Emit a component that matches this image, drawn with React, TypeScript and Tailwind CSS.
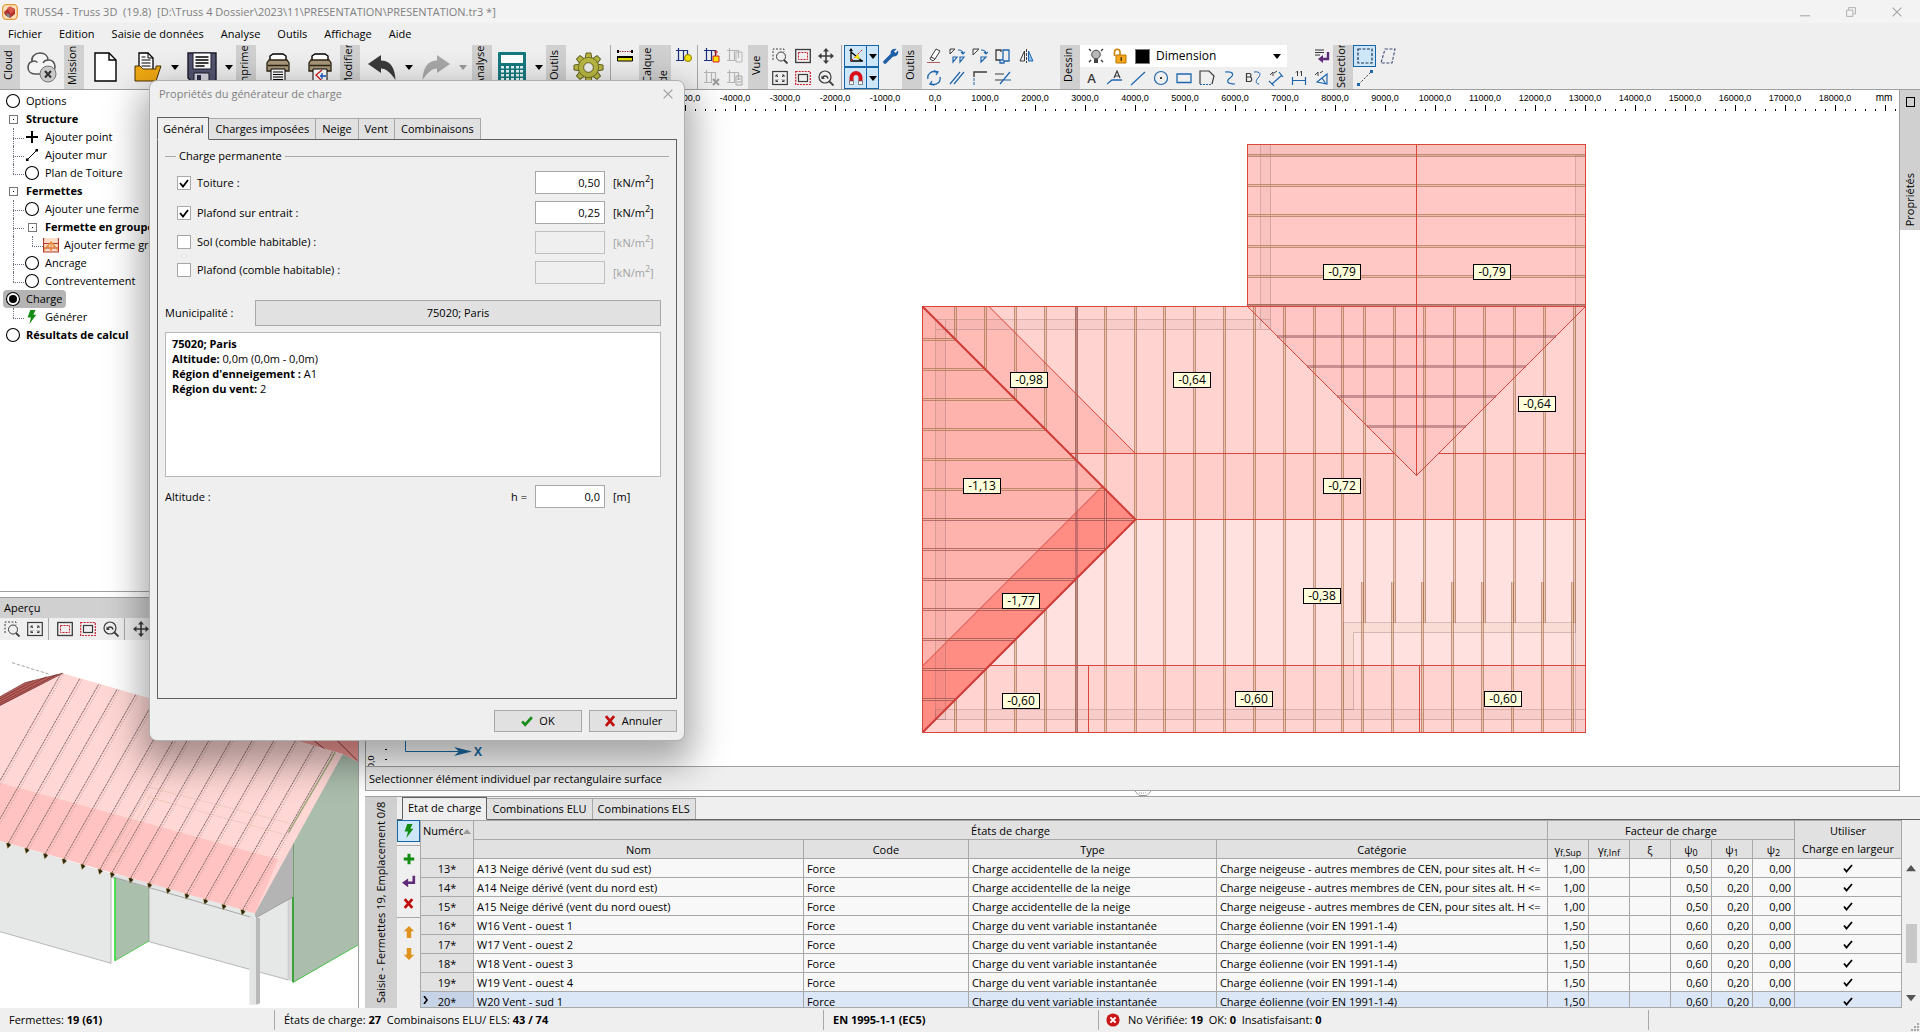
import { useState } from 'react';
import type { ReactNode } from 'react';
import clsx from 'clsx';

/* ---------- icons ---------- */

function Icon({
  children,
  size = 'h-4 w-4',
}: {
  children: ReactNode;
  size?: string;
}) {
  return (
    <svg viewBox="0 0 16 16" fill="none" className={clsx('shrink-0', size)}>
      {children}
    </svg>
  );
}

const dark = '#3c3c3c';
const blue = '#1f66ad';

const BoltIcon = () => (
  <Icon size="h-3.5 w-3.5">
    <path d="M6 0h6L9.500 5.500H13L5 16l1.800-7.500H3z" fill="#128c12" />
  </Icon>
);

const ZoomAreaIcon = () => (
  <Icon>
    <path d="M1 12V1h11v3" stroke={dark} strokeDasharray="2 1.500" />
    <circle cx="9" cy="8.500" r="4.500" stroke={dark} />
    <path d="m12 12 3.500 3.500" stroke={dark} strokeWidth="1.800" />
  </Icon>
);

const FitIcon = () => (
  <Icon>
    <rect x="0.700" y="1.500" width="14.600" height="13" stroke={dark} strokeWidth="1.200" />
    <path
      d="M4 7V5h2M4 5l2 2M12 7V5h-2M12 5l-2 2M4 9.500v2h2M4 11.500l2-2M12 9.500v2h-2M12 11.500l-2-2"
      stroke={dark}
    />
  </Icon>
);

const FrameInIcon = () => (
  <Icon>
    <rect x="0.700" y="1.500" width="14.600" height="13" stroke={dark} strokeWidth="1.300" />
    <rect x="3.500" y="4.500" width="9" height="7" stroke="#c81e2d" strokeDasharray="2 1" />
  </Icon>
);

const FrameOutIcon = () => (
  <Icon>
    <rect x="0.700" y="1.500" width="14.600" height="13" stroke="#c81e2d" strokeWidth="1.200" strokeDasharray="2 1" />
    <rect x="3.500" y="4.500" width="9" height="7" stroke={dark} strokeWidth="1.200" />
  </Icon>
);

const ZoomBackIcon = () => (
  <Icon>
    <circle cx="7" cy="7" r="6" stroke={dark} strokeWidth="1.200" />
    <path d="m11.500 11.500 4 4" stroke={dark} strokeWidth="1.800" />
    <path d="M4.500 8.500C5 5.500 9 5 10 8.500" stroke={dark} strokeWidth="1.500" />
    <path d="M3.500 5.500v3.500H7z" fill={dark} />
  </Icon>
);

const MoveIcon = () => (
  <Icon>
    <path d="M8 2v12M2 8h12" stroke={dark} strokeWidth="1.600" />
    <path d="m8 0 3 3.500H5zM8 16l3-3.500H5zM0 8l3.500-3v6zM16 8l-3.500-3v6z" fill={dark} />
  </Icon>
);

const GreenCheck = () => (
  <Icon size="h-3 w-3">
    <path d="m1.500 8.500 4 4.500 9-10" stroke="#1a8a1a" strokeWidth="3.500" />
  </Icon>
);

const RedCross = () => (
  <Icon size="h-3 w-3">
    <path d="m2.500 1.500 11 13M13.500 1.500l-11 13" stroke="#c00d0d" strokeWidth="3.600" />
  </Icon>
);

const EnterIcon = () => (
  <Icon size="h-3.5 w-3.5">
    <path d="M13.500 2v8H6" stroke="#5f2a78" strokeWidth="3" />
    <path d="M0 10l7-5v10z" fill="#5f2a78" />
  </Icon>
);

const Caret = ({ color = '#000' }: { color?: string }) => (
  <svg viewBox="0 0 8 5" className="h-[5px] w-2">
    <path d="M0 0h8L4 5z" fill={color} />
  </svg>
);

const LayerIcon = ({ mark, off }: { mark: ReactNode; off?: boolean }) => {
  const c = off ? '#b5b5b5' : '#1c2f7a';
  return (
    <Icon>
      <path d="M2.500 0v13M7.500 2v11M11.500 2v8M0 2.500h12M0 12.500h8" stroke={c} strokeWidth="1.200" />
      {mark}
    </Icon>
  );
};

const CloudIcon = () => (
  <svg viewBox="0 0 30 32" className="h-8 w-[30px]" fill="none">
    <path
      d="M8 23c-4 0-7-2.500-7-6.500 0-3 1.500-5 4-6C4 6 8 2 13 2s8 3 8 7c4-.5 7 2.500 7 6.500 0 4.500-3 7.500-7 7.500z"
      stroke="#555"
      strokeWidth="1.600"
      fill="#f5f5f5"
    />
    <path d="M5 10.500c2-1 4-.5 5.500 1M21 9c-2 0-4 1-5 3" stroke="#555" strokeWidth="1.400" />
    <circle cx="21" cy="23" r="8" fill="#c9c9c9" stroke="#777" />
    <path d="m18 20 6 6.500M24 20l-6 6.500" stroke="#333" strokeWidth="2" />
  </svg>
);

const DocIcon = () => (
  <svg viewBox="0 0 24 30" className="h-[30px] w-6" fill="none">
    <path d="M1 1h14l7 7v21H1z" fill="#fff" stroke="#000" strokeWidth="1.400" />
    <path d="M15 1v7h7" stroke="#000" strokeWidth="1.400" />
  </svg>
);

const FolderIcon = () => (
  <svg viewBox="0 0 28 30" className="h-[30px] w-7" fill="none">
    <path d="M5 17V1h9l5 5v11" fill="#fff" stroke="#000" strokeWidth="1.300" />
    <path d="M14 1v5h5M7.500 5h4M7.500 8h9M7.500 11h9M7.500 14h9" stroke="#000" />
    <path d="M1 29V14h5l3 3h13v-3h5L22 29z" fill="#f0a812" stroke="#4a3300" />
  </svg>
);

const FloppyIcon = () => (
  <svg viewBox="0 0 30 30" className="h-[30px] w-[30px]" fill="none">
    <path d="M1 1h28v28H4l-3-3z" fill="#545472" stroke="#1b1b2b" strokeWidth="1.400" />
    <path d="M6 1h18v16H6z" fill="#fff" stroke="#1b1b2b" />
    <path d="M8.500 5h13M8.500 8h13M8.500 11h13M8.500 14h9" stroke="#000" strokeWidth="1.300" />
    <path d="M7 21h15v8H7z" fill="#d8d8e4" stroke="#1b1b2b" />
    <path d="M10 23h4v6h-4z" fill="#2b2b45" />
  </svg>
);

const PrinterIcon = ({ drawing }: { drawing?: boolean }) => (
  <svg viewBox="0 0 24 30" className="h-[30px] w-6" fill="none">
    <path d="M4 9V4l3-2h10l3 2v5" fill="#fff" stroke="#000" strokeWidth="1.400" />
    <path d="M3 8h18l2 3v8H1v-8z" fill="#a8977a" stroke="#2c2416" strokeWidth="1.300" />
    <path d="M2 13.500h20" stroke="#2c2416" strokeWidth="1.500" />
    <path d="M5 17h14v12H5z" fill="#fff" stroke="#000" />
    {drawing ? (
      <>
        <path d="m14 18-6 5 6 6" stroke="#d01515" strokeWidth="1.300" />
        <path d="M14 21v6M12 24h6" stroke="#1551c0" strokeWidth="1.300" />
      </>
    ) : (
      <path d="M7 20h10M7 22.500h10M7 25h10M7 27.500h10" stroke="#000" />
    )}
  </svg>
);

const UndoIcon = ({ color, flip }: { color: string; flip?: boolean }) => (
  <svg
    viewBox="0 0 28 28"
    className={clsx('h-7 w-7', flip && '-scale-x-100')}
    fill={color}
  >
    <path d="M0 11 13 2v5.500c9 0 14 7 14.500 19.500C23 20 18 15.500 13 15.500V20z" />
  </svg>
);

const CalcIcon = () => (
  <svg viewBox="0 0 28 30" className="h-[30px] w-7" fill="none">
    <rect width="28" height="30" rx="1" fill="#157a80" />
    <path d="M3 3h22v8H3z" fill="#fff" />
    {[14, 18, 22, 26].map((y) =>
      [3, 8, 13, 18, 22].map((x) => (
        <rect key={`${x}-${y}`} x={x} y={y} width="3" height="2.500" fill="#e9f6f6" />
      )),
    )}
  </svg>
);

const GearIcon = () => (
  <svg viewBox="-16 -16 32 32" className="h-[31px] w-[31px]">
    {[0, 45, 90, 135, 180, 225, 270, 315].map((a) => (
      <path
        key={a}
        d="M-3.500-9-2.500-15h5l1 6z"
        transform={`rotate(${a})`}
        fill="#b9b843"
        stroke="#5e5d1e"
      />
    ))}
    <circle r="10.500" fill="#b9b843" stroke="#5e5d1e" strokeWidth="0.800" />
    <circle r="5" fill="#efefef" stroke="#5e5d1e" />
  </svg>
);

const LogoIcon = () => (
  <Icon>
    <rect x="0.700" y="0.700" width="14.600" height="14.600" rx="3.500" fill="#ffe3bd" stroke="#e39a3c" strokeWidth="1.300" />
    <path d="m2 8 6-5.500L13 5v5l-5 4-5-3z" fill="#b3332c" />
    <path d="m8 2.500 5 3-4 4.500-4-6z" fill="#d95a4d" />
    <path d="M4.500 9 8 10.500V14l-3.500-2z" fill="#7c7f8c" />
  </Icon>
);

/* ---------- toolbar ---------- */

function Strip({ children, wide }: { children: ReactNode; wide?: boolean }) {
  return (
    <div
      className={clsx(
        'flex h-11 shrink-0 rotate-180 items-start justify-center overflow-hidden bg-[#d0d0d0] pt-1 leading-4 whitespace-nowrap [writing-mode:vertical-rl]',
        wide ? 'w-8' : 'w-5',
      )}
    >
      {children}
    </div>
  );
}

function BigButton({
  label,
  children,
  menu,
  caret = '#000',
  wide,
}: {
  label: string;
  children: ReactNode;
  menu?: boolean;
  caret?: string;
  wide?: boolean;
}) {
  return (
    <>
      <button
        aria-label={label}
        className={clsx(
          'flex h-11 shrink-0 items-center justify-center',
          wide ? 'w-11' : 'w-10',
        )}
      >
        {children}
      </button>
      {menu && (
        <button
          aria-label={`${label} menu`}
          className="flex h-11 w-3.5 shrink-0 items-center justify-center"
        >
          <Caret color={caret} />
        </button>
      )}
    </>
  );
}

function SmallButton({
  children,
  label,
  active,
}: {
  children?: ReactNode;
  label: string;
  active?: boolean;
}) {
  return (
    <button
      aria-label={label}
      className={clsx(
        'flex h-[22px] w-[23px] shrink-0 items-center justify-center',
        active && 'border border-[#1566a8] bg-[#cde6f8]',
      )}
    >
      {children}
    </button>
  );
}

const Sep = () => <div className="h-11 w-px shrink-0 bg-[#a8a8a8]" />;

const drawTools: [string, ReactNode][] = [
  ['Texte', <span key="i" className="text-[13px] font-semibold text-[#3c3c3c]">A</span>],
  [
    'Repère',
    <Icon key="i">
      <path d="M0 14 5 10h10" stroke={blue} strokeWidth="1.300" />
      <path d="m7 8 3-7 3 7M8 6h4" stroke={dark} strokeWidth="1.200" />
    </Icon>,
  ],
  ['Ligne', <Icon key="i"><path d="M1 15 15 2" stroke={blue} strokeWidth="1.200" /></Icon>],
  [
    'Cercle',
    <Icon key="i">
      <circle cx="8" cy="8" r="6.500" stroke={blue} strokeWidth="1.200" />
      <circle cx="8" cy="8" r="1" fill="#000" />
    </Icon>,
  ],
  ['Rectangle', <Icon key="i"><path d="M1 4h14v8.500H1z" stroke={blue} strokeWidth="1.300" /></Icon>],
  [
    'Polygone',
    <Icon key="i">
      <path d="M1 14V1h9l5 5-2 8" stroke={dark} strokeWidth="1.200" />
      <path d="M1 14.500h12" stroke={blue} strokeDasharray="2 1" />
    </Icon>,
  ],
  ['Courbe', <Icon key="i"><path d="M3 2c9-1 9 3 5 6s-3 6 5 6" stroke={blue} strokeWidth="1.200" /></Icon>],
  [
    'Bézier',
    <Icon key="i">
      <path d="M1.500 3v9M1.500 3.500h3c2 0 2 3.500 0 3.500h-3 3.500c2.500 0 2 4.500 0 4.500H1.500" stroke={dark} strokeWidth="1.200" />
      <path d="M9 2c7-1 7 3 4 6s-2 6 1 6" stroke={blue} />
    </Icon>,
  ],
  [
    'Cote oblique',
    <Icon key="i">
      <path d="m4 14 10-9M1 11l5 5M11 2l4 5" stroke={blue} strokeWidth="1.200" />
      <path d="M2 5l3-3v4M6 3l3-2" stroke={dark} />
    </Icon>,
  ],
  [
    'Cote',
    <Icon key="i">
      <path d="M1.500 7v8M14.500 7v8M2 10.500h12" stroke={blue} strokeWidth="1.200" />
      <path d="M5 2.500 6.500 1v5M9 2.500 10.500 1v5" stroke={dark} />
    </Icon>,
  ],
  [
    "Cote d'angle",
    <Icon key="i">
      <path d="M3 12 13 4v10zM8 8l4 6" stroke={blue} strokeWidth="1.200" />
      <path d="M1 5l3-3v4M6 3l3-2" stroke={dark} />
    </Icon>,
  ],
];

const lockedLayer = (
  <LayerIcon mark={<path d="M9 8h6v6H9zM12 2v5M10 4h4" fill="#ffe000" stroke="#c22" />} />
);

function Toolbar() {
  return (
    <div className="flex h-[45px] shrink-0 items-start overflow-hidden border-b border-[#a0a0a0] bg-[#efefef]">
      <Strip>Cloud</Strip>
      <BigButton label="Cloud" wide><CloudIcon /></BigButton>
      <Strip>Mission</Strip>
      <BigButton label="Nouveau" wide><DocIcon /></BigButton>
      <BigButton label="Ouvrir" menu><FolderIcon /></BigButton>
      <BigButton label="Enregistrer" menu><FloppyIcon /></BigButton>
      <Strip>Imprimer</Strip>
      <BigButton label="Imprimer" wide><PrinterIcon /></BigButton>
      <BigButton label="Imprimer dessin"><PrinterIcon drawing /></BigButton>
      <Strip>Modifier</Strip>
      <div className="flex shrink-0 px-0.5">
        <BigButton label="Annuler" menu><UndoIcon color="#3a3a3a" /></BigButton>
        <BigButton label="Rétablir" menu caret="#9a9a9a"><UndoIcon color="#a8a8a8" flip /></BigButton>
      </div>
      <Strip>Analyse</Strip>
      <BigButton label="Calculer" menu><CalcIcon /></BigButton>
      <Strip>Outils</Strip>
      <BigButton label="Paramètres" wide><GearIcon /></BigButton>
      <Sep />
      <div className="flex w-7 shrink-0 justify-center">
        <SmallButton label="Mesurer">
          <Icon>
            <path d="M0 3.500h16" stroke="#a33" strokeDasharray="1.500 1" />
            <path d="M0 2h2v3H0zM14 2h2v3h-2z" fill="#000" />
            <path d="M0.500 9h15v4h-15z" fill="#e6e000" stroke="#000" />
            <path d="M0 9h16" stroke="#000" strokeWidth="2" />
          </Icon>
        </SmallButton>
      </div>
      <Strip wide>Calque<br />de</Strip>
      <div className="flex w-[26px] shrink-0 justify-center">
        <SmallButton label="Calque visible">
          <LayerIcon mark={<circle cx="12" cy="10" r="3.500" fill="#f4e400" stroke="#8a7a00" />} />
        </SmallButton>
      </div>
      <Sep />
      <div className="grid shrink-0 grid-cols-[23px_23px] px-0.5">
        <SmallButton label="Verrouiller calque">{lockedLayer}</SmallButton>
        <SmallButton label="Copier calque">
          <LayerIcon off mark={<path d="M9 4h6v10H9z" stroke="#b5b5b5" />} />
        </SmallButton>
        <SmallButton label="Supprimer calque">
          <LayerIcon off mark={<path d="m9 9 6 6M15 9l-6 6" stroke="#9a9a9a" strokeWidth="2" />} />
        </SmallButton>
        <SmallButton label="Liste des calques">
          <LayerIcon off mark={<path d="M9 6h6v9H9zM10 9h4M10 12h4" stroke="#a5a5a5" />} />
        </SmallButton>
      </div>
      <Strip>Vue</Strip>
      <div className="grid shrink-0 grid-cols-[23px_23px_23px]">
        <SmallButton label="Zoom zone"><ZoomAreaIcon /></SmallButton>
        <SmallButton label="Cadre intérieur"><FrameInIcon /></SmallButton>
        <SmallButton label="Déplacer"><MoveIcon /></SmallButton>
        <SmallButton label="Zoom tout"><FitIcon /></SmallButton>
        <SmallButton label="Cadre extérieur"><FrameOutIcon /></SmallButton>
        <SmallButton label="Zoom précédent"><ZoomBackIcon /></SmallButton>
      </div>
      <div className="ml-1 flex shrink-0 gap-0.5">
        <Sep />
        <div className="grid grid-cols-[23px_12px]">
          <SmallButton label="Accrochage axes" active>
            <Icon>
              <path d="M3 1v12h12M3 4l11 9" stroke="#000" strokeWidth="1.300" />
              <path d="M3 13 14 2" stroke="#e02020" strokeDasharray="3 1.500" />
              <path d="M6 10 10 6l2 5z" fill="#f2e200" />
              <path d="m3 0 2 3H1z" fill="#000" />
            </Icon>
          </SmallButton>
          <button aria-label="Options axes" className="flex items-center justify-center border border-l-0 border-[#1566a8] bg-[#cde6f8]">
            <Caret />
          </button>
          <SmallButton label="Aimant" active>
            <Icon>
              <path d="M3.500 11V7.500a4.500 4.500 0 0 1 9 0V11" stroke="#d8121a" strokeWidth="4" />
              <path d="M1.500 11h4v3.500h-4zM10.500 11h4v3.500h-4z" fill="#fff" stroke="#555" strokeWidth="0.700" />
            </Icon>
          </SmallButton>
          <button aria-label="Options aimant" className="flex items-center justify-center border border-l-0 border-[#1566a8] bg-[#cde6f8]">
            <Caret />
          </button>
        </div>
      </div>
      <SmallButton label="Réglages">
        <Icon>
          <path d="m2 14 7-7" stroke="#1f5fa8" strokeWidth="3.600" strokeLinecap="round" />
          <path d="M8 3c1-2 3.500-2.500 5.500-2L11 3.500 12.500 5 15 2.500c1 3-1 6-4 6S7 6 8 3z" fill="#1f5fa8" />
        </Icon>
      </SmallButton>
      <Strip>Outils</Strip>
      <div className="mr-[23px] grid shrink-0 grid-cols-[repeat(5,23px)]">
        <SmallButton label="Effacer">
          <Icon>
            <path d="m5 9 5-8 4 2-5 8zM5 9l-1 2 3 2 2-2" stroke={dark} fill="#fff" />
            <path d="M1 14.500h13" stroke="#b06060" />
          </Icon>
        </SmallButton>
        <SmallButton label="Copier">
          <Icon>
            <path d="M1 1h5L1 6z" stroke={dark} />
            <path d="M9 2c4 0 5 1 5 4M12 4l2 2 2-2M4 9h4l-4 5zM11 9h4l-4 5z" stroke={blue} strokeWidth="1.200" />
          </Icon>
        </SmallButton>
        <SmallButton label="Déplacer élément">
          <Icon>
            <path d="M1 1h6L1 7z" stroke={dark} />
            <path d="M9 2c4 0 5 1 5 4M12 4l2 2 2-2M9 9h5l-5 5z" stroke={blue} strokeWidth="1.200" />
          </Icon>
        </SmallButton>
        <SmallButton label="Décaler">
          <Icon>
            <path d="M6 4V2H1v10h4" stroke={dark} strokeWidth="1.300" />
            <path d="M9 2h5v11H9v2H5v-3h3V2z" stroke={blue} strokeWidth="1.300" />
          </Icon>
        </SmallButton>
        <SmallButton label="Miroir">
          <Icon>
            <path d="M8.500 1v14" stroke={dark} strokeDasharray="3 1" />
            <path d="M6.500 3v10H2z" stroke={dark} />
            <path d="M10.500 3v10H15z" stroke={blue} fill="#8fc1ea" />
          </Icon>
        </SmallButton>
        <SmallButton label="Rotation">
          <Icon>
            <path d="M2 9a6 6 0 0 1 9-6.500M14 7a6 6 0 0 1-9 6.500M8 1l4 1-2 3M8 15l-4-1 2-3" stroke={blue} strokeWidth="1.300" />
          </Icon>
        </SmallButton>
        <SmallButton label="Parallèle">
          <Icon><path d="M1 14 11 2M5 14 15 2" stroke={blue} strokeWidth="1.200" /></Icon>
        </SmallButton>
        <SmallButton label="Angle">
          <Icon>
            <path d="M2 15V7" stroke={blue} strokeDasharray="3 1" />
            <path d="M2 7V2h13" stroke={dark} strokeWidth="1.400" />
          </Icon>
        </SmallButton>
        <SmallButton label="Couper">
          <Icon>
            <path d="M0 4h9M0 10h8" stroke={dark} strokeWidth="1.200" />
            <path d="M15 2 5 14M9 10h7" stroke={blue} strokeWidth="1.200" />
          </Icon>
        </SmallButton>
      </div>
      <Strip>Dessin</Strip>
      <div className="shrink-0">
        <div className="flex">
          <div className="flex h-[22px] w-[207px] items-center bg-white pl-2">
            <Icon>
              <circle cx="8" cy="6.500" r="4.300" fill="#b8b8b8" stroke="#444" />
              <path d="M6 11h4v4H6z" fill="#444" />
              <path d="m1 1 2 2M15 1l-2 2M1 14l2-2M15 14l-2-2" stroke="#333" strokeWidth="1.300" />
            </Icon>
            <span className="w-2" />
            <Icon>
              <path d="M2.500 8V4a2.700 2.700 0 0 1 5.500 0v3" stroke="#c98000" strokeWidth="1.600" />
              <path d="M4 7h10v8H4z" fill="#f5a81c" stroke="#b87500" />
              <path d="M8.500 9h1.500v4H8.500z" fill="#5a3b00" />
            </Icon>
            <span className="ml-[7px] h-[15px] w-[15px] border border-[#777] bg-black" />
            <select aria-label="Calque de dessin" className="ml-1.5 flex-1 appearance-none bg-transparent text-[12px] outline-none">
              <option>Dimension</option>
            </select>
            <span className="mr-1.5"><Caret /></span>
          </div>
          <div className="ml-[23px]">
            <SmallButton label="Importer">
              <Icon>
                <path d="M1 2h9M1 4.500h9M1 7h5" stroke="#333" />
                <path d="M14 4v7H8" stroke="#5f2a78" strokeWidth="2.400" />
                <path d="m4 11 5-4v8z" fill="#5f2a78" />
              </Icon>
            </SmallButton>
          </div>
        </div>
        <div className="flex">
          {drawTools.map(([label, icon]) => (
            <SmallButton key={label} label={label}>{icon}</SmallButton>
          ))}
        </div>
      </div>
      <Strip>Selection</Strip>
      <div className="grid shrink-0 grid-cols-[23px_23px]">
        <SmallButton label="Sélection rectangle" active>
          <Icon><path d="M1 1h14v14H1z" stroke="#1d3557" strokeWidth="1.200" strokeDasharray="3 1.500" /></Icon>
        </SmallButton>
        <SmallButton label="Sélection polygone">
          <Icon><path d="M5 1h10l-3 14H1z" stroke="#444a78" strokeWidth="1.100" strokeDasharray="3 1.500" /></Icon>
        </SmallButton>
        <SmallButton label="Sélection ligne">
          <Icon>
            <path d="m2 14 12-12" stroke={dark} strokeDasharray="2 1.500" />
            <path d="M0 13h3v3H0zM13 0h3v3h-3z" fill={blue} />
          </Icon>
        </SmallButton>
      </div>
    </div>
  );
}

/* ---------- tree ---------- */

type TreeItem = {
  label: string;
  level: number;
  kind: 'circle' | 'selected' | 'box' | 'plus' | 'line' | 'truss' | 'bolt';
  bold?: boolean;
  last?: boolean;
};

const tree: TreeItem[] = [
  { label: 'Options', level: 0, kind: 'circle' },
  { label: 'Structure', level: 0, kind: 'box', bold: true },
  { label: 'Ajouter point', level: 1, kind: 'plus' },
  { label: 'Ajouter mur', level: 1, kind: 'line' },
  { label: 'Plan de Toiture', level: 1, kind: 'circle', last: true },
  { label: 'Fermettes', level: 0, kind: 'box', bold: true },
  { label: 'Ajouter une ferme', level: 1, kind: 'circle' },
  { label: 'Fermette en groupe', level: 1, kind: 'box', bold: true },
  { label: 'Ajouter ferme groupe', level: 2, kind: 'truss', last: true },
  { label: 'Ancrage', level: 1, kind: 'circle' },
  { label: 'Contreventement', level: 1, kind: 'circle', last: true },
  { label: 'Charge', level: 0, kind: 'selected' },
  { label: 'Générer', level: 1, kind: 'bolt', last: true },
  { label: 'Résultats de calcul', level: 0, kind: 'circle', bold: true },
];

function TreeGlyph({ kind }: { kind: TreeItem['kind'] }) {
  if (kind === 'bolt') return <BoltIcon />;
  return (
    <Icon>
      {(kind === 'circle' || kind === 'selected') && (
        <circle cx="8" cy="8" r="6.500" stroke="#000" strokeWidth="1.100" fill="#fff" />
      )}
      {kind === 'selected' && <circle cx="8" cy="8" r="4" fill="#000" />}
      {kind === 'box' && (
        <>
          <rect x="4.500" y="4.500" width="8" height="8" fill="#fff" stroke="#777" />
          <path d="M8 8h1v1H8z" fill="#000" />
        </>
      )}
      {kind === 'plus' && <path d="M8 2v12M2 8h12" stroke="#000" strokeWidth="2" />}
      {kind === 'line' && (
        <>
          <path d="m3 13 10-10" stroke="#000" />
          <path d="M2 11.500h2.500V14H2zM11.500 2H14v2.500h-2.500z" fill="#000" />
        </>
      )}
      {kind === 'truss' && (
        <>
          <path d="M1 1h14v14H1z" fill="#fbdcc8" />
          <path d="M0.500 1v14h15V1M0 6.500h16M0 11h16" stroke="#b33a2a" strokeWidth="1.200" />
          <path d="M1 13 8 5l7 8M8 5v9M5 9l3 4 3-4" stroke="#e58a3a" strokeWidth="1.200" />
        </>
      )}
    </Icon>
  );
}

function TreeRow({ item }: { item: TreeItem }) {
  return (
    <li className="flex h-[18px] items-center">
      {item.level > 0 && (
        <span className={clsx('relative ml-[13px] h-full shrink-0', item.level === 1 ? 'w-[11px]' : 'w-[30px]')}>
          {!(item.last && item.level === 1) && <i className="absolute inset-y-0 left-0 border-l border-dotted border-gray-500" />}
          {item.last && item.level === 1 && <i className="absolute top-0 left-0 h-2.5 border-l border-dotted border-gray-500" />}
          {item.level === 2 && <i className="absolute top-0 left-[19px] h-2.5 border-l border-dotted border-gray-500" />}
          <i className={clsx('absolute top-2.5 border-t border-dotted border-gray-500', item.level === 2 ? 'right-0 left-[19px]' : 'inset-x-0')} />
        </span>
      )}
      <button
        className={clsx(
          'flex h-full items-center gap-[5px] whitespace-nowrap',
          item.level === 0 && 'ml-[3px] rounded-sm pr-1 pl-0.5',
          item.kind === 'selected' && 'bg-[#b4b4b4]',
          item.bold && 'font-bold',
        )}
      >
        <span className="flex w-4 justify-center"><TreeGlyph kind={item.kind} /></span>
        {item.label}
      </button>
    </li>
  );
}

/* ---------- 3D preview ---------- */

function Preview() {
  const eaves = [25, 80, 136, 192, 248, 300, 336, 392, 448, 504, 560, 616, 671, 728];
  const rafters = [-88, -32, ...eaves];
  return (
    <svg viewBox="0 180 1074 1104" preserveAspectRatio="xMinYMin slice" className="min-h-0 w-full flex-1 bg-white">
      <defs>
        <clipPath id="roof">
          <path d="M188 280 1028 522 765 1000 0 782V378z" />
        </clipPath>
      </defs>
      <path d="m36 248 110 34" stroke="#777" strokeWidth="2" strokeDasharray="10 5" />
      <path d="M0 782 333 880V1150L0 1055z" fill="#e6e8e7" />
      <path d="M0 1055 333 1150V885" stroke="#999" strokeWidth="2" fill="none" />
      <path d="M335 880 765 990V1015L335 895z" fill="#e0e2e1" />
      <path d="M447 920 865 955V1200L447 1085z" fill="#e6e8e7" />
      <path d="m447 1085 418 115V955" stroke="#999" strokeWidth="2" fill="none" />
      <path d="M865 950h15v255l-15-5z" fill="#d4d6d5" />
      <path d="M345 893 447 925V1083L345 1142z" fill="#abbfad" />
      <path d="M447 1083 345 1142" stroke="#58c858" strokeWidth="3" />
      <path d="M345 893V1142" stroke="#35e035" strokeWidth="5" />
      <path d="M447 925V1083" stroke="#7d967f" strokeWidth="2" />
      <path d="M1028 522 1074 545V1095L880 1208V775z" fill="#abbdad" />
      <path d="M880 775V950" stroke="#3f8a3f" strokeWidth="3" />
      <path d="M879 1207 1074 1095" stroke="#4cc44c" strokeWidth="3" />
      <path d="M879 950V1207" stroke="#1f9a1f" strokeWidth="5" />
      <path d="M880 775V950L765 1015V970z" fill="#b4b4b4" />
      <path d="M765 1015 880 950" stroke="#888" strokeWidth="2" />
      <path d="M890 470H1074V545L1028 522 890 482z" fill="#f39a95" />
      <path d="m940 480 35 28M1010 480l62 62" stroke="#8b3a3a" strokeWidth="3" />
      <path d="M188 280 1028 522 765 1000 0 782V378z" fill="#ffd8d5" />
      <path d="M0 608 835 838 765 1000 0 782z" fill="#ffc4c1" />
      <path d="M0 350 75 308 188 280 0 378z" fill="#b8625e" />
      <path d="M0 376 188 280M0 370 170 284M0 363 140 290M0 356 100 302M0 350 75 308 188 280" stroke="#6e2424" strokeWidth="2" fill="none" />
      <g clipPath="url(#roof)">
        {rafters.map((x) => (
          <g key={x}>
            <path d={`M${x} ${782 + x * 0.285}L${x + 272} ${304 + x * 0.285}`} stroke="#80686a" strokeWidth="3" strokeDasharray="7 2" />
            <path d={`M${x + 7} ${784 + x * 0.285}L${x + 279} ${306 + x * 0.285}`} stroke="#b08c8c" strokeWidth="2" strokeDasharray="4 4" />
          </g>
        ))}
        <path d="m1005 518-140 240" stroke="#9aa878" strokeWidth="4" />
      </g>
      <path d="m440 620 430 110M440 650l420 115M440 625 335 815h20L455 640" stroke="#d8b8a0" strokeWidth="2" fill="none" strokeDasharray="5 3" />
      {eaves.map((x) => (
        <path key={x} d={`M${x - 6} ${782 + x * 0.285}h8l6 6-10 10z`} fill="#2e2410" stroke="#b59a2a" />
      ))}
      <path d="m335 890 430 125" stroke="#888" strokeWidth="2" />
      <path d="M748 1010h20v264h-20z" fill="#e2e4e3" />
      <path d="M768 1014h12v256l-12 4z" fill="#b8b8b8" />
    </svg>
  );
}

/* ---------- plan view ---------- */

const loadLabels: [number, number, string][] = [
  [1342, 272, '-0,79'],
  [1492, 272, '-0,79'],
  [1029, 380, '-0,98'],
  [1192, 380, '-0,64'],
  [1537, 404, '-0,64'],
  [982, 486, '-1,13'],
  [1342, 486, '-0,72'],
  [1322, 596, '-0,38'],
  [1021, 601, '-1,77'],
  [1021, 701, '-0,60'],
  [1254, 699, '-0,60'],
  [1503, 699, '-0,60'],
];

const hipRafters = [955, 985, 1015, 1045, 1076, 1105];
const innerRafters = [1135, 1164, 1194, 1224, 1254, 1284, 1314, 1342];
const upperRafters = [1364, 1394, 1424, 1454, 1484, 1514, 1544, 1574];
const lowerRafters = [1362, 1392, 1422, 1452, 1482, 1512, 1542, 1572];

function PlanView() {
  const ticks = Array.from({ length: 147 }, (_, i) => i - 50);
  // each member is drawn as its two faces with the timber between them
  const vert = (x: number, y1: number, y2: number) => (
    <g key={`v${x}-${y1}`}>
      <path d={`M${x + 0.5} ${y1}V${y2}`} stroke="#e2b48c" strokeOpacity="0.6" />
      <path d={`M${x - 0.5} ${y1}V${y2}M${x + 1.5} ${y1}V${y2}`} />
    </g>
  );
  const horiz = (y: number, x1: number, x2: number) => (
    <g key={`h${y}-${x1}`}>
      <path d={`M${x1} ${y + 0.5}H${x2}`} stroke="#e2b48c" strokeOpacity="0.6" />
      <path d={`M${x1} ${y - 0.5}H${x2}M${x1} ${y + 1.5}H${x2}`} />
    </g>
  );
  return (
    <svg className="min-h-0 w-full flex-1 bg-white" shapeRendering="crispEdges">
      <g transform="translate(-366 -90)">
        {/* ruler */}
        <g fontFamily="Liberation Sans, Arial, sans-serif" fontSize="9" textAnchor="middle">
          {ticks.map((i) => (
            <path key={i} d={`M${935.5 + i * 10} ${i % 5 === 0 ? 105 : 109}V111`} stroke="#000" />
          ))}
          {ticks.filter((i) => i % 5 === 0 && i / 5 <= 18).map((i) => (
            <text key={i} x={935 + i * 10} y="101">{`${(i / 5) * 1000},0`}</text>
          ))}
          <text x="1884" y="101" fontSize="10">mm</text>
          <text transform="translate(374 768) rotate(-90)" textAnchor="start">0,0</text>
          <path d="M385 749.500h2M385 759.500h2" stroke="#000" />
        </g>

        {/* axes */}
        <g shapeRendering="auto">
          <path d="M405.500 690V751.500H466" stroke="#1b6ea8" fill="none" />
          <path d="m454 747 18 4.500-18 4.500 5-4.500z" fill="#1b6ea8" />
          <text x="474" y="756" fontSize="12" fontWeight="700" fill="#1b6ea8">X</text>
        </g>

        {/* load zones */}
        <path d="M1247.500 144.500h338v162h-338z" fill="#ffc8c5" />
        <path d="M922.500 306.500h663v147h-663z" fill="#ffd3d0" />
        <path d="M922.500 306.500H989l146.500 147H1069.500z" fill="#ffbcb7" />
        <path d="M1069.500 453.500h516v66h-450z" fill="#ffcdca" />
        <path d="M1247.500 306.500h338l-169 169z" fill="#ffc6c3" />
        <path d="M922.500 306.500l213 213-213 213z" fill="#ffb3ad" />
        <path d="M1135.500 519.500h450v146h-596z" fill="#ffe2df" />
        <path d="M989.500 665.500h596v67h-663z" fill="#ffd3d0" />
        <path d="M1102.500 486l33 33.500-213 213v-67z" fill="#ff8d84" />

        {/* walls below the roof */}
        <g stroke="#7a5a5a" strokeOpacity="0.28" fill="#a08080" fillOpacity="0.08">
          <path d="M935.500 319.500h10v400h-10zM935.500 319.500h335v10h-335zM1260.500 144.500h10v185h-10z" />
          <path d="M1575.500 155.500h10v577h-10zM935.500 709.500h650v10h-650z" />
          <path d="M1247.500 144.500h338v11h-338z" />
          <path d="M1343.500 622.500h232v10h-222v77h-10z" fill="#b0a060" />
        </g>

        {/* rafters */}
        <g stroke="#9c6848" strokeOpacity="0.62" fill="none">
          {hipRafters.map((x) => vert(x, 307, x - 616))}
          {hipRafters.map((x) => vert(x, 1655 - x, 732))}
          {innerRafters.map((x) => vert(x, 307, 732))}
          {upperRafters.map((x) => vert(x, 307, 623))}
          {lowerRafters.map((x) => vert(x, 582, 732))}
          {[155, 185, 215, 246, 276, 305].map((y) => horiz(y, 1248, 1585))}
          {[0, 1, 2, 3, 4, 5].map((i) => horiz(339 + i * 30, 923, 955 + i * 30))}
        </g>
        <g stroke="#8a3a42" strokeOpacity="0.6" fill="none">
          {[0, 1, 2, 3, 4, 5, 6].map((i) => horiz(519 + i * 30, 923, 1135 - i * 30))}
          {vert(1105, 489, 549)}
        </g>
        <g stroke="#8a4a52" strokeOpacity="0.45" strokeWidth="3">
          <path d="M1076.500 307V732" />
          <path d="M1277 336.500h279M1307 366.500h219M1337 396.500h159M1367 426.500h99M1248 305.500h337" />
        </g>

        {/* zone outlines */}
        <g stroke="#d9463a" fill="none">
          <path d="M1247.500 306.500v-162h338v588h-663v-426h325M1416.500 144.500v331M1247.500 306.500h338" />
          <path d="M1069.500 453.500h325M1438.500 453.500h147M1135.500 519.500h450M989.500 665.500h596M1088.500 665.500v67M1419.500 665.500v67" />
        </g>
        <g stroke="#d9463a" fill="none" shapeRendering="auto">
          <path d="M1247.500 306.500l169 169 169-169M989 306.500l146.500 147M1102.500 486l-180 180" />
          <path d="M922.500 306.500l213 213-213 213" stroke="#cf3d38" strokeWidth="2" />
        </g>

        {/* load values */}
        {loadLabels.map(([x, y, value]) => (
          <g key={`${x}-${y}`}>
            <rect x={x - 18.5} y={y - 7.5} width="37" height="15" fill="#ffffdc" stroke="#000" />
            <text x={x} y={y + 4} fontSize="12" textAnchor="middle">{value}</text>
          </g>
        ))}
      </g>
    </svg>
  );
}

/* ---------- load case panel ---------- */

const snowCategory = 'Charge neigeuse - autres membres de CEN, pour sites alt. H <=';
const windCategory = 'Charge éolienne (voir EN 1991-1-4)';

const loadCases = [
  { no: '13*', name: 'A13 Neige dérivé (vent du sud est)', snow: true },
  { no: '14*', name: 'A14 Neige dérivé (vent du nord est)', snow: true },
  { no: '15*', name: 'A15 Neige dérivé (vent du nord ouest)', snow: true },
  { no: '16*', name: 'W16 Vent - ouest 1' },
  { no: '17*', name: 'W17 Vent - ouest 2' },
  { no: '18*', name: 'W18 Vent - ouest 3' },
  { no: '19*', name: 'W19 Vent - ouest 4' },
  { no: '20*', name: 'W20 Vent - sud 1', current: true },
];

const th = 'border border-[#a8a8a8] bg-[#e1e1e1] font-normal h-[19px] px-0 pt-px pb-0 leading-[14px] whitespace-nowrap';
const td = 'border border-[#a8a8a8] h-[19px] px-[3px] pt-px pb-0 leading-[14px] whitespace-nowrap overflow-hidden';

function LoadTable() {
  return (
    <table className="w-full table-fixed border-collapse">
      <colgroup>
        <col className="w-[53px]" />
        <col />
        <col className="w-[165px]" />
        <col className="w-[248px]" />
        <col className="w-[331px]" />
        <col className="w-[41px]" />
        <col className="w-[41px]" />
        <col className="w-[41px]" />
        <col className="w-[41px]" />
        <col className="w-[41px]" />
        <col className="w-[42px]" />
        <col className="w-[107px]" />
      </colgroup>
      <thead>
        <tr>
          <th rowSpan={2} className={clsx(th, 'align-top')}>
            <span className="flex items-center pt-0.5 pl-0.5">
              <span className="w-10 overflow-hidden text-left">Numéro</span>
              <svg viewBox="0 0 8 5" className="h-[5px] w-2"><path d="M4 0l4 5H0z" fill="#999" /></svg>
            </span>
          </th>
          <th colSpan={4} className={th}>États de charge</th>
          <th colSpan={6} className={th}>Facteur de charge</th>
          <th className={clsx(th, 'border-b-0')}>Utiliser</th>
        </tr>
        <tr>
          <th className={th}>Nom</th>
          <th className={th}>Code</th>
          <th className={th}>Type</th>
          <th className={th}>Catégorie</th>
          <th className={th}>γ<sub className="text-[9px]">f,Sup</sub></th>
          <th className={th}>γ<sub className="text-[9px]">f,Inf</sub></th>
          <th className={th}>ξ</th>
          <th className={th}>ψ<sub className="text-[9px]">0</sub></th>
          <th className={th}>ψ<sub className="text-[9px]">1</sub></th>
          <th className={th}>ψ<sub className="text-[9px]">2</sub></th>
          <th className={clsx(th, 'border-t-0')}>Charge en largeur</th>
        </tr>
      </thead>
      <tbody>
        {loadCases.map((row) => (
          <tr key={row.no} className={row.current ? 'bg-[#dbe6f6]' : 'bg-[#f8f8f8]'}>
            <td className={clsx(td, 'relative text-center', row.current ? 'bg-[#c6d3e6]' : 'bg-[#e1e1e1]')}>
              {row.current && (
                <svg viewBox="0 0 5 8" className="absolute top-1 left-0.5 h-2 w-[5px]" fill="none">
                  <path d="m1 0 3 4-3 4" stroke="#000" strokeWidth="1.600" />
                </svg>
              )}
              {row.no}
            </td>
            <td className={td}>{row.name}</td>
            <td className={td}>Force</td>
            <td className={td}>{row.snow ? 'Charge accidentelle de la neige' : 'Charge du vent variable instantanée'}</td>
            <td className={td}>{row.snow ? snowCategory : windCategory}</td>
            <td className={clsx(td, 'text-right')}>{row.snow ? '1,00' : '1,50'}</td>
            <td className={td} />
            <td className={td} />
            <td className={clsx(td, 'text-right')}>{row.snow ? '0,50' : '0,60'}</td>
            <td className={clsx(td, 'text-right')}>0,20</td>
            <td className={clsx(td, 'text-right')}>0,00</td>
            <td className={td}>
              <svg viewBox="0 0 10 9" className="mx-auto h-[9px] w-2.5" fill="none">
                <path d="m1 4.500 2.500 3L9 1" stroke="#000" strokeWidth="1.800" />
              </svg>
            </td>
          </tr>
        ))}
      </tbody>
    </table>
  );
}

function LoadPanel() {
  const tabs = ['Etat de charge', 'Combinations ELU', 'Combinations ELS'];
  const [tab, setTab] = useState(tabs[0]);
  return (
    <section className="flex h-[212px] shrink-0 overflow-hidden border-t border-[#a0a0a0] bg-[#efefef]">
      <div className="w-8 shrink-0 rotate-180 overflow-hidden bg-[#d0d0d0] text-center leading-8 whitespace-nowrap [writing-mode:vertical-rl]">
        Saisie - Fermettes 19, Emplacement 0/8
      </div>
      <div className="flex min-w-0 flex-1 flex-col">
        <div role="tablist" className="flex h-[23px] shrink-0 items-end border-b border-[#606060] pl-[5px]">
          {tabs.map((t) => (
            <button
              key={t}
              role="tab"
              aria-selected={t === tab}
              onClick={() => setTab(t)}
              className={clsx(
                'border px-[5px] whitespace-nowrap',
                t === tab
                  ? '-mb-px h-[23px] border-[#606060] border-b-[#efefef] pb-0.5'
                  : 'h-[21px] border-b-0 border-l-0 border-[#a8a8a8] bg-[#e1e1e1]',
              )}
            >
              {t}
            </button>
          ))}
        </div>
        <div className="flex min-h-0 flex-1">
          <div className="flex w-[23px] shrink-0 flex-col items-center">
            <SmallButton label="Générer" active><BoltIcon /></SmallButton>
            <div className="mt-[3px] mb-0.5 h-px w-full bg-[#a8a8a8]" />
            <SmallButton label="Ajouter">
              <Icon size="h-3 w-3"><path d="M8 1v14M1 8h14" stroke="#128c12" strokeWidth="4" /></Icon>
            </SmallButton>
            <SmallButton label="Insérer"><EnterIcon /></SmallButton>
            <SmallButton label="Supprimer">
              <Icon size="h-[11px] w-[11px]"><path d="m2.500 1.500 11 13M13.500 1.500l-11 13" stroke="#c00d0d" strokeWidth="4" /></Icon>
            </SmallButton>
            <div className="mt-[3px] mb-[3px] h-px w-full bg-[#a8a8a8]" />
            <SmallButton label="Monter">
              <Icon size="h-3 w-3"><path d="m8 0 7 7h-4v9H5V7H1z" fill="#e0921e" /></Icon>
            </SmallButton>
            <SmallButton label="Descendre">
              <Icon size="h-3 w-3"><path d="m8 16 7-7h-4V0H5v9H1z" fill="#e0921e" /></Icon>
            </SmallButton>
          </div>
          <div className="min-w-0 flex-1 overflow-hidden border-b border-[#a8a8a8]">
            <LoadTable />
          </div>
          <div className="flex w-[18px] shrink-0 flex-col items-center bg-[#f0f0f0] pt-11">
            <svg viewBox="0 0 8 5" className="h-2 w-2.5"><path d="M4 0l4 5H0z" fill="#555" /></svg>
            <div className="mt-[52px] h-[39px] w-[11px] bg-[#c8c8c8]" />
            <svg viewBox="0 0 8 5" className="mt-auto mb-1.5 h-2 w-2.5"><path d="M0 0h8L4 5z" fill="#555" /></svg>
          </div>
        </div>
      </div>
    </section>
  );
}

/* ---------- dialog ---------- */

const permanentLoads = [
  { id: 'toiture', label: 'Toiture :', value: '0,50', on: true },
  { id: 'entrait', label: 'Plafond sur entrait :', value: '0,25', on: true },
  { id: 'sol', label: 'Sol (comble habitable) :', value: '', on: false },
  { id: 'plafond', label: 'Plafond (comble habitable) :', value: '', on: false },
];

const numberBox = 'h-[23px] w-[70px] border border-[#a8a8a8] pr-1 text-right outline-none';

function LoadDialog() {
  const tabs = ['Général', 'Charges imposées', 'Neige', 'Vent', 'Combinaisons'];
  const [tab, setTab] = useState(tabs[0]);
  const [enabled, setEnabled] = useState(permanentLoads.map((l) => l.on));

  return (
    <div
      role="dialog"
      aria-label="Propriétés du générateur de charge"
      className="absolute top-20 left-[149px] flex h-[661px] w-[536px] flex-col rounded-lg border border-[#b0b0b0] bg-[#efefef] px-[7px] shadow-[0_16px_36px_8px_rgba(0,0,0,0.35)]"
    >
      <div className="flex h-[35px] shrink-0 items-start justify-between pt-[5px] text-[#808080]">
        <span className="pl-0.5">Propriétés du générateur de charge</span>
        <button aria-label="Fermer" className="pt-[3px] pr-1">
          <Icon size="h-2.5 w-2.5"><path d="m1 1 14 14M15 1 1 15" stroke="#a0a0a0" strokeWidth="2.200" /></Icon>
        </button>
      </div>

      <div role="tablist" className="flex h-[23px] shrink-0 items-end">
        {tabs.map((t) => (
          <button
            key={t}
            role="tab"
            aria-selected={t === tab}
            onClick={() => setTab(t)}
            className={clsx(
              'relative border whitespace-nowrap',
              t === tab
                ? 'z-10 -mb-px h-[23px] border-[#606060] border-b-[#efefef] px-[5px]'
                : 'h-[21px] border-b-0 border-l-0 border-[#a8a8a8] bg-[#e1e1e1] px-1.5',
            )}
          >
            {t}
          </button>
        ))}
      </div>

      <div className="h-[560px] shrink-0 border border-[#606060] px-[7px] pt-[7px]">
        <fieldset>
          <legend className="flex w-full items-center gap-[3px] leading-[18px]">
            <span className="h-px w-[11px] bg-[#a8a8a8]" />
            Charge permanente
            <span className="h-px flex-1 bg-[#a8a8a8]" />
          </legend>
          <div className="flex items-start justify-between pt-[6px] pl-3">
            <div className="-mt-[3px] flex flex-col">
              {permanentLoads.map((load, i) => (
                <label key={load.id} className={clsx('flex items-center gap-[6px]', i < 2 ? 'h-[30px]' : 'h-7')}>
                  <span className="relative flex">
                    <input
                      type="checkbox"
                      checked={enabled[i]}
                      onChange={() => setEnabled(enabled.map((v, j) => (j === i ? !v : v)))}
                      className="h-3.5 w-3.5 appearance-none border border-[#a8a8a8] bg-white"
                    />
                    {enabled[i] && (
                      <svg viewBox="0 0 14 14" className="pointer-events-none absolute inset-0 h-3.5 w-3.5" fill="none">
                        <path d="m3 7 3 3.500L11 4" stroke="#000" strokeWidth="1.800" />
                      </svg>
                    )}
                  </span>
                  {load.label}
                </label>
              ))}
            </div>
            <div className="flex flex-col gap-[7px] pr-2">
              {permanentLoads.map((load, i) => (
                <div key={load.id} className={clsx('flex items-center gap-2', !enabled[i] && 'text-[#a0a0a0]')}>
                  <input
                    aria-label={`${load.label} valeur`}
                    defaultValue={load.value}
                    disabled={!enabled[i]}
                    className={clsx(numberBox, enabled[i] ? 'bg-white' : 'border-[#c0c0c0] bg-[#efefef]')}
                  />
                  <span className="w-12">[kN/m<sup className="text-[9px]">2</sup>]</span>
                </div>
              ))}
            </div>
          </div>
        </fieldset>

        <div className="mt-4 flex items-center pr-2">
          <label htmlFor="municipality" className="w-[90px]">Municipalité :</label>
          <button id="municipality" className="h-[26px] flex-1 border border-[#a8a8a8] bg-[#e1e1e1]">75020; Paris</button>
        </div>

        <div className="mt-1.5 mr-2 h-[145px] border border-[#b8b8b8] bg-white px-1.5 pt-[3px] leading-[15px]">
          <p className="font-bold">75020; Paris</p>
          <p><b>Altitude:</b> 0,0m (0,0m - 0,0m)</p>
          <p><b>Région d'enneigement :</b> A1</p>
          <p><b>Région du vent:</b> 2</p>
        </div>

        <div className="mt-2 flex items-center">
          <span className="flex-1">Altitude :</span>
          <label htmlFor="altitude" className="pr-2">h =</label>
          <input id="altitude" defaultValue="0,0" className={clsx(numberBox, 'bg-white')} />
          <span className="ml-2 w-14">[m]</span>
        </div>
      </div>

      <div className="flex justify-end gap-[7px] pt-[11px]">
        <button className="flex h-[22px] w-[88px] items-center justify-center gap-1.5 border border-[#a8a8a8] bg-[#e1e1e1]">
          <GreenCheck /> OK
        </button>
        <button className="flex h-[22px] w-[88px] items-center justify-center gap-1.5 border border-[#a8a8a8] bg-[#e1e1e1]">
          <RedCross /> Annuler
        </button>
      </div>
    </div>
  );
}

/* ---------- page ---------- */

const menus = ['Fichier', 'Edition', 'Saisie de données', 'Analyse', 'Outils', 'Affichage', 'Aide'];

export default function App() {
  return (
    <div className="relative flex h-screen flex-col overflow-hidden bg-white font-['Open_Sans','Noto_Sans',sans-serif] text-[11px] leading-4 text-black">
      <header className="flex h-[23px] shrink-0 items-center bg-[#f3f3f3] pl-0.5 text-[#808080]">
        <LogoIcon />
        <h1 className="ml-[6px] flex-1 whitespace-pre">
          {'TRUSS4 - Truss 3D  (19.8)  [D:\\Truss 4 Dossier\\2023\\11\\PRESENTATION\\PRESENTATION.tr3 *]'}
        </h1>
        <div className="flex items-center gap-9 pr-[18px]">
          <button aria-label="Réduire"><Icon size="h-2.5 w-2.5"><path d="M0 14h16" stroke="#b0b0b0" strokeWidth="2" /></Icon></button>
          <button aria-label="Restaurer">
            <Icon size="h-2.5 w-2.5"><path d="M1 5h10v10H1zM4 4V1h11v10h-3" stroke="#b0b0b0" strokeWidth="1.600" /></Icon>
          </button>
          <button aria-label="Fermer la fenêtre"><Icon size="h-2.5 w-2.5"><path d="m1 1 14 14M15 1 1 15" stroke="#a8a8a8" strokeWidth="2" /></Icon></button>
        </div>
      </header>
      <nav className="flex h-[22px] shrink-0 items-center gap-[17px] bg-[#efefef] pl-2">
        {menus.map((m) => (
          <button key={m}>{m}</button>
        ))}
      </nav>
      <Toolbar />

      <main className="flex min-h-0 flex-1">
        <aside className="flex w-[359px] shrink-0 flex-col border-r border-[#a0a0a0]">
          <ul className="min-h-0 flex-1 overflow-hidden border-b border-[#a0a0a0] pt-0.5">
            {tree.map((item) => (
              <TreeRow key={item.label} item={item} />
            ))}
          </ul>
          <section className="mt-[5px] flex h-[411px] shrink-0 flex-col border-t border-[#a0a0a0]">
            <h2 className="h-5 shrink-0 bg-[#d0d0d0] pl-1 leading-5">Aperçu</h2>
            <div className="flex h-[22px] shrink-0 items-center bg-[#efefef]">
              <SmallButton label="Aperçu zoom zone"><ZoomAreaIcon /></SmallButton>
              <SmallButton label="Aperçu zoom tout"><FitIcon /></SmallButton>
              <div className="mr-1 ml-0.5 h-[22px] w-px bg-[#a8a8a8]" />
              <SmallButton label="Aperçu cadre intérieur"><FrameInIcon /></SmallButton>
              <SmallButton label="Aperçu cadre extérieur"><FrameOutIcon /></SmallButton>
              <SmallButton label="Aperçu zoom précédent"><ZoomBackIcon /></SmallButton>
              <div className="mr-1 ml-0.5 h-[22px] w-px bg-[#a8a8a8]" />
              <SmallButton label="Aperçu déplacer"><MoveIcon /></SmallButton>
            </div>
            <Preview />
          </section>
        </aside>

        <div className="ml-[6px] flex min-w-0 flex-1 flex-col">
          <div className="flex min-h-0 flex-1">
            <div className="flex min-w-0 flex-1 flex-col border-x border-[#a0a0a0]">
              <PlanView />
              <p className="h-[25px] shrink-0 border-y border-[#a0a0a0] bg-[#efefef] pl-[3px] leading-[23px]">
                Selectionner élément individuel par rectangulaire surface
              </p>
            </div>
            <div className="w-5 shrink-0">
              <button className="flex h-[140px] w-5 flex-col items-center justify-between bg-[#d0d0d0] pt-[7px] pb-1">
                <span className="h-2.5 w-[9px] border border-black" />
                <span className="rotate-180 [writing-mode:vertical-rl]">Propriétés</span>
              </button>
            </div>
          </div>
          <div className="flex h-[5px] shrink-0 justify-center">
            <svg viewBox="0 0 16 5" className="h-[5px] w-4" fill="none">
              <path d="m0 0 4 4.500h8L16 0" stroke="#999" />
              <path d="M4 2h8" stroke="#999" strokeDasharray="1 1" />
            </svg>
          </div>
          <LoadPanel />
        </div>
      </main>

      <footer className="flex h-6 shrink-0 items-center bg-[#efefef]">
        <p className="w-[274px] pl-[9px]">Fermettes: <b>19 (61)</b></p>
        <p className="w-[549px] border-l border-[#a8a8a8] pl-[9px] leading-5 whitespace-pre">
          États de charge: <b>27</b>{'  '}Combinaisons ELU/ ELS: <b>43 / 74</b>
        </p>
        <p className="w-[275px] border-l border-[#a8a8a8] pl-[9px] leading-5 font-bold">EN 1995-1-1 (EC5)</p>
        <p className="flex w-[550px] items-center gap-2 border-l border-[#a8a8a8] pl-[7px] leading-5 whitespace-pre">
          <Icon size="h-3.5 w-3.5">
            <circle cx="8" cy="8" r="7.500" fill="#c81414" />
            <path d="m5 5 6 6M11 5l-6 6" stroke="#fff" strokeWidth="2.400" />
          </Icon>
          <span>No Vérifiée: <b>19</b>{'  '}OK: <b>0</b>{'  '}Insatisfaisant: <b>0</b></span>
        </p>
        <div className="h-5 flex-1 border-l border-[#a8a8a8]" />
        <svg viewBox="0 0 10 10" className="h-2.5 w-2.5 self-end" fill="#a8a8a8">
          <path d="M7 1h2v2H7zM4 4h2v2H4zM7 4h2v2H7zM1 7h2v2H1zM4 7h2v2H4zM7 7h2v2H7z" />
        </svg>
      </footer>

      <LoadDialog />
    </div>
  );
}
